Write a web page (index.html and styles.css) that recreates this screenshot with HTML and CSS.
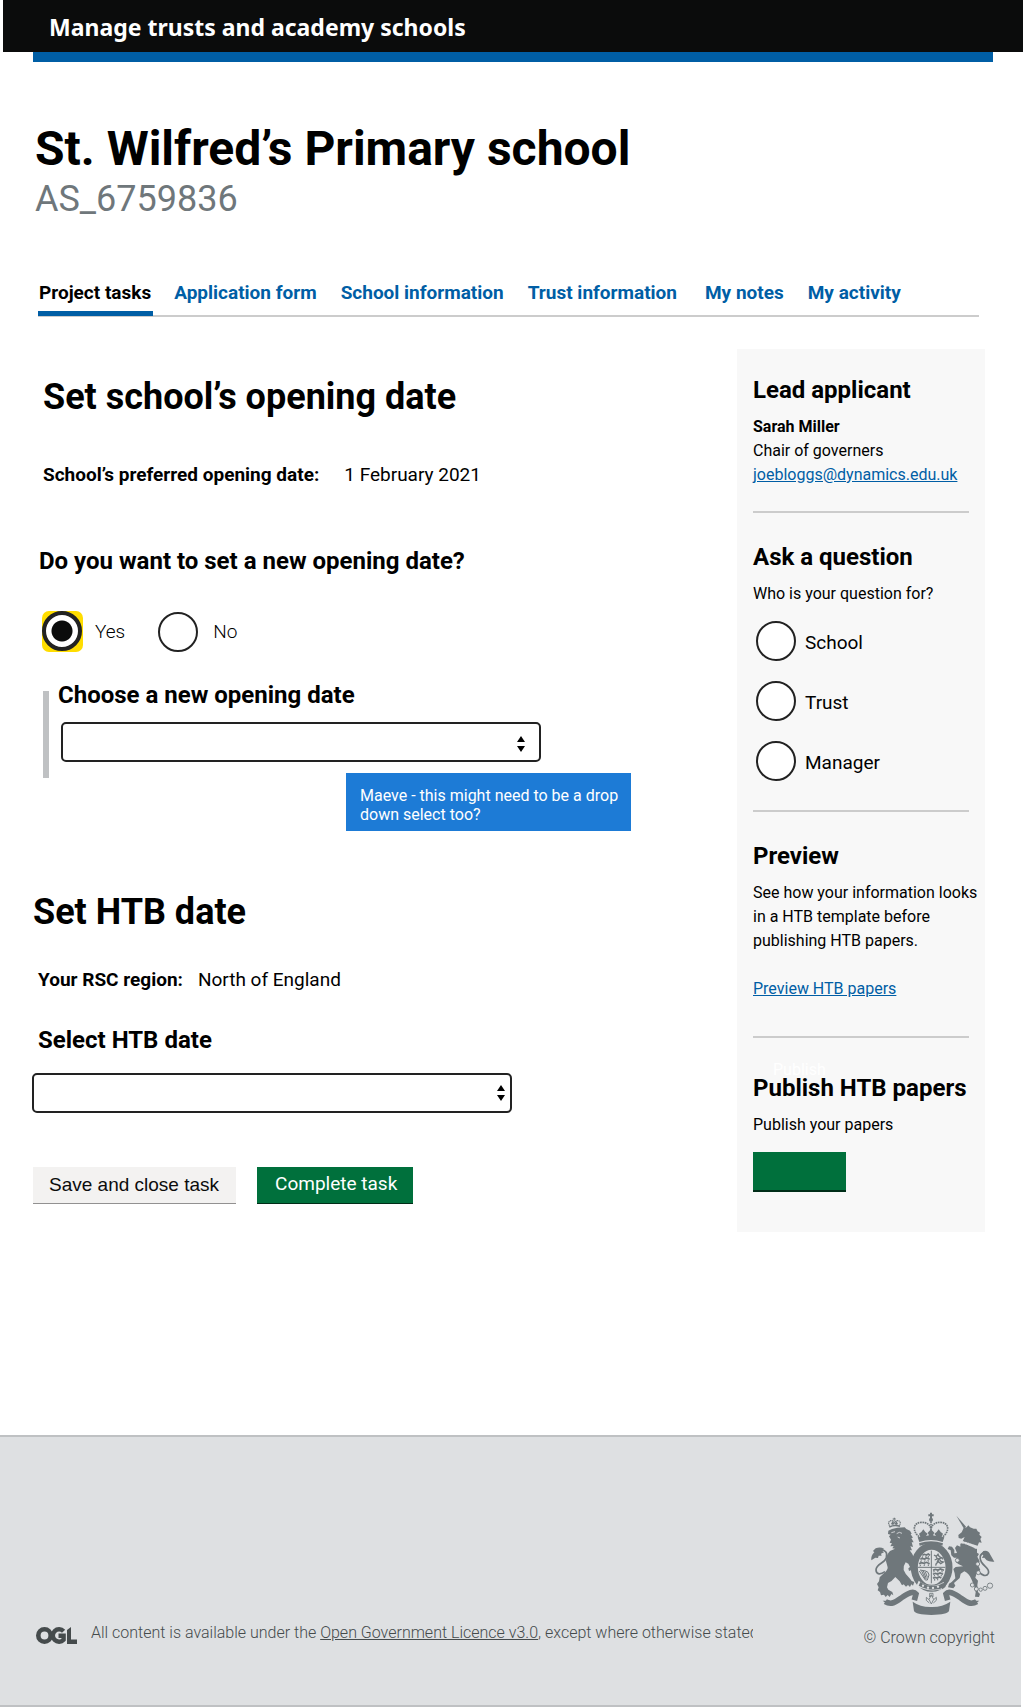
FILE: index.html
```html
<!DOCTYPE html>
<html lang="en">
<head>
<meta charset="utf-8">
<meta name="viewport" content="width=device-width, initial-scale=1">
<title>Set school’s opening date</title>
<link rel="stylesheet" href="styles.css">
</head>
<body>
<header class="site-header">
  <a class="site-name" href="#">Manage trusts and academy schools</a>
</header>
<div class="site-stripe"></div>

<div class="page">
  <div class="page-title">
    <h1>St. Wilfred’s Primary school</h1>
    <p class="reference">AS_6759836</p>
  </div>

  <nav class="tabs" aria-label="Project">
    <a class="tab tab-current" href="#" aria-current="page">Project tasks</a>
    <a class="tab" href="#">Application form</a>
    <a class="tab" href="#">School information</a>
    <a class="tab" href="#">Trust information</a>
    <span class="tab-group">
      <a class="tab" href="#">My notes</a>
      <a class="tab" href="#">My activity</a>
    </span>
  </nav>

  <div class="columns">
    <main class="tasks">
      <section class="opening">
        <h2>Set school’s opening date</h2>
        <dl class="fact fact-wide">
          <dt>School’s preferred opening date:</dt>
          <dd>1 February 2021</dd>
        </dl>
        <fieldset class="question">
          <legend>Do you want to set a new opening date?</legend>
          <div class="choices">
            <label class="choice"><span class="focus-box"><input class="radio" type="radio" name="new-date" checked></span><span>Yes</span></label>
            <label class="choice choice-no"><input class="radio" type="radio" name="new-date"><span>No</span></label>
          </div>
        </fieldset>
        <div class="conditional">
          <label class="field-label" for="opening-date">Choose a new opening date</label>
          <div class="select select-inset">
            <select id="opening-date"><option></option></select>
            <svg class="arrows" viewBox="0 0 8 17" aria-hidden="true"><path d="M4 0L8 6H0ZM4 16L0 10H8Z"/></svg>
          </div>
        </div>
        <p class="annotation">Maeve - this might need to be a drop down select too?</p>
      </section>

      <section class="htb">
        <h2>Set HTB date</h2>
        <dl class="fact">
          <dt>Your RSC region:</dt>
          <dd>North of England</dd>
        </dl>
        <label class="field-label" for="htb-date">Select HTB date</label>
        <div class="select select-flush">
          <select id="htb-date"><option></option></select>
          <svg class="arrows" viewBox="0 0 8 17" aria-hidden="true"><path d="M4 0L8 6H0ZM4 16L0 10H8Z"/></svg>
        </div>
      </section>

      <div class="actions">
        <button class="button button-secondary" type="button">Save and close task</button>
        <button class="button" type="button">Complete task</button>
      </div>
    </main>

    <aside class="sidebar">
      <section class="panel">
        <h3>Lead applicant</h3>
        <p><strong>Sarah Miller</strong><br>Chair of governers<br><a href="#">joebloggs@dynamics.edu.uk</a></p>
      </section>
      <section class="panel panel-ask">
        <h3 id="ask">Ask a question</h3>
        <p>Who is your question for?</p>
        <div class="recipients" role="radiogroup" aria-labelledby="ask">
          <label class="choice"><input class="radio" type="radio" name="recipient"><span>School</span></label>
          <label class="choice"><input class="radio" type="radio" name="recipient"><span>Trust</span></label>
          <label class="choice"><input class="radio" type="radio" name="recipient"><span>Manager</span></label>
        </div>
      </section>
      <section class="panel panel-preview">
        <h3>Preview</h3>
        <p>See how your information looks in a HTB template before publishing HTB papers.</p>
        <p class="preview-link"><a href="#">Preview HTB papers</a></p>
      </section>
      <section class="panel panel-publish">
        <h3>Publish HTB papers</h3>
        <p>Publish your papers</p>
        <button class="publish" type="button"><span class="publish-label">Publish</span></button>
      </section>
    </aside>
  </div>
</div>

<footer class="site-footer">
  <div class="licence">
    <svg class="ogl" viewBox="0 0 41 17" role="img" aria-label="OGL">
      <circle cx="8.5" cy="8.5" r="6.2" fill="none" stroke="#454b4c" stroke-width="4.6"/>
      <path d="M27.6 4.3A6.2 6.2 0 1 0 27.6 12.700V8.800H22.500" fill="none" stroke="#454b4c" stroke-width="4.4"/>
      <path d="M31 3L35 0V12.500H41V17H31Z" fill="#454b4c"/>
    </svg>
    <p class="licence-text">All content is available under the <a href="#">Open Government Licence v3.0</a>, except where otherwise stated</p>
  </div>
  <div class="crown">
    <svg class="crest" viewBox="30 36 375 315" aria-hidden="true">
      <g fill="#6f777b">
        <path d="M210 38h6v5h5v6h-5v5h-6v-5h-5v-6h5z"/>
        <circle cx="213" cy="59" r="6"/>
        <path d="M173 112L181 110L177 101L184 96L190 88L196 96L203 101L198 108L207 106L203 98L213 88L223 98L219 106L228 108L223 101L230 96L236 88L242 96L249 101L245 110L253 112L248 126Q213 114 178 126Z"/>
        <path d="M177 130Q213 118 249 130L247 137Q213 126 179 137Z"/>
      </g>
      <g fill="none" stroke="#6f777b" stroke-width="5" stroke-dasharray="5 2">
        <path d="M177 110C155 92 160 67 185 67C201 67 209 74 212 84"/>
        <path d="M249 110C271 92 266 67 241 67C225 67 217 74 214 84"/>
        <path d="M213 64V92"/>
      </g>
      <ellipse cx="215" cy="202" rx="52" ry="63" fill="none" stroke="#6f777b" stroke-width="21"/>
      <g fill="none" stroke="#6f777b">
        <path d="M214 152V250M173 202H256" stroke-width="3"/>
        <path d="M187 166l6-3 6 2 6-3 5 4M181 178l6-3 7 2 6-3 9 4M177 191l7-3 8 2 7-3 10 4" stroke-width="5"/>
        <path d="M219 211l7-3 8 2 7-3 11 4M219 223l7-3 7 2 7-3 9 4M219 235l6-3 6 2 7-3 6 3" stroke-width="5"/>
        <path d="M188 169l-2 5M198 168l-1 5M205 168v5M184 181l-2 5M195 181l-2 4M204 180l1 5M182 194l-2 5M194 193l-2 5M205 193v5M223 212l-2 5M234 211l-1 6M245 211l2 6M224 225l-2 4M234 224v5M243 225l2 4M224 236v6M233 236v5" stroke-width="3"/>
        <path d="M222 165l7 4 5-6 3 6 8 5-8 2 6 8 7 2-8 5-6-6-7 5-2 7M224 180l7-3M228 172l8 7-5 7M245 171l4 7" stroke-width="4"/>
        <path d="M180 210L197 213Q206 215 207 225L202 240L196 240L178 213M185 213L196 237M190 213L199 236M196 215L202 232" stroke-width="3"/>
      </g>
      <path d="M176 242Q211 270 251 246L256 264Q216 281 169 259Z" fill="#dee0e2"/>
      <path d="M181 246Q211 267 247 251L251 263Q215 278 176 257Z" fill="#6f777b"/>
      <path d="M242 252L262 245L256 261L247 268Z" fill="#6f777b"/>
      <g fill="#dee0e2"><circle cx="189" cy="257" r="3.500"/><circle cx="204" cy="263" r="3.500"/><circle cx="219" cy="264" r="3.500"/><circle cx="234" cy="260" r="3.500"/></g>

      <g fill="#6f777b">
        <path d="M85 92L96 87L112 83L134 82L139 87L150 92L155 101L152 103L159 113L154 114L161 127L155 127L159 141L151 139L156 151L149 151Q157 160 162 174L167 187L165 195L170 202L166 216L161 211L158 218L153 211L147 213L145 205L150 201L145 191L137 187Q130 196 131 210Q136 224 150 236L155 243L163 246L159 257L154 253L150 261L144 255L138 260L131 253L126 256L119 244L106 231Q97 243 84 249L81 262L85 269L97 276L100 286L94 282L89 291L83 285L77 291L72 284L63 286L60 276L53 271L56 262L51 252L57 244L59 232L70 221Q84 211 83 202L78 184Q78 165 90 153L105 146L97 145L101 138L91 139L96 130L89 128L93 119L87 109L92 104L84 102Z"/>
        <path d="M47 145Q60 139 72 146L67 153L72 157L63 161L65 167L56 167L54 174L46 173L34 181Q32 167 43 157L39 153Z"/>
      </g>
      <g fill="none" stroke="#6f777b">
        <path d="M89 77C82 68 88 61 95 62C100 62 102 66 103 70C104 66 107 62 113 62C121 62 124 70 117 77M103 53V62M98 57H108" stroke-width="3.500" stroke-dasharray="4 1.500"/>
        <path d="M88 81Q103 73 120 79M95 73l3-5 3 5M106 73l3-5 3 5" stroke-width="5"/>
      </g>
      <path d="M94 98l11-3M110 101l8-4 8 3M113 111l7 3" stroke="#dee0e2" stroke-width="2.500" fill="none"/>
      <path d="M60 151C75 148 84 158 79 173C74 190 48 191 48 210C49 225 62 224 75 215" fill="none" stroke="#6f777b" stroke-width="5"/>

      <g fill="#6f777b">
        <path d="M289 47L318 80L312 86Z"/>
        <path d="M311 84L320 82L325 76L330 82L341 86L349 86L353 94L360 98L358 104L365 111L361 117L365 128L357 127L353 137L308 124L314 111L304 116L296 114L295 105L305 97Z"/>
        <path d="M309 129L351 147L351 158L357 162L352 170L359 184L354 194L361 210L350 220L346 233L354 242L352 255L354 276L360 282L357 291L345 290L347 277L342 256L334 237Q327 220 313 214L302 221L299 234L282 249L286 257L280 265L264 262L267 251L275 246L286 235L284 220L280 207L287 201L309 199Q293 193 288 187L290 173L282 173L274 166L272 151L263 147L267 139L276 140L283 150L283 160L291 159L285 144L291 136L301 140L301 131Z"/>
        <path d="M370 153Q385 149 391 164L397 175L403 185Q387 186 380 181L373 173L366 174L370 166L364 161Z"/>
      </g>
      <path d="M307 127Q329 131 350 144" fill="none" stroke="#dee0e2" stroke-width="7" stroke-dasharray="5 3"/>
      <path d="M374 157C358 161 358 175 364 186C372 200 391 206 385 220C379 232 366 226 355 214" fill="none" stroke="#6f777b" stroke-width="5"/>
      <g fill="#dee0e2" stroke="#6f777b" stroke-width="2.500">
        <circle cx="292" cy="181" r="6"/><circle cx="353" cy="192" r="6"/><circle cx="355" cy="218" r="6"/><circle cx="337" cy="255" r="6"/><circle cx="349" cy="267" r="6"/><circle cx="362" cy="269" r="5"/><circle cx="375" cy="265" r="6"/><circle cx="390" cy="257" r="8"/>
      </g>

      <g fill="none" stroke="#6f777b" stroke-width="17">
        <path d="M76 305C96 318 112 302 128 291C146 279 160 272 168 282L163 301"/>
        <path d="M350 305C330 318 314 302 298 291C280 279 266 272 258 282L263 301"/>
      </g>
      <g fill="#6f777b">
        <path d="M68 302L90 302L84 314Z"/>
        <path d="M358 302L336 302L342 314Z"/>
        <path d="M158 305Q182 322 214 321Q246 322 271 305L267 333Q263 344 214 345Q166 344 162 333Z"/>
      </g>
      <path d="M209 280h10v10M209 280v11l5-7 5 7M214 286l7 12-7 14-7-14zM207 299l-8-7v9l9 8M221 299l8-7v9l-9 8" fill="none" stroke="#6f777b" stroke-width="2.500"/>
    </svg>
    <p>© Crown copyright</p>
  </div>
</footer>
</body>
</html>
```

FILE: styles.css
```css
* {
  box-sizing: border-box;
}

body {
  margin: 0;
  background: #fff;
  color: #000;
  font: 16px/24px Roboto, "Liberation Sans", sans-serif;
}

h1, h2, h3, p, dl, dd, fieldset {
  margin: 0;
  padding: 0;
}

a {
  color: #005ea5;
}

/* Header */
.site-header {
  margin: 0 2px 0 3px;
  padding: 11px 46px 9px;
  background: #0b0c0c;
}

.site-name {
  display: block;
  color: #fff;
  font: 700 23px/32px "Noto Sans", sans-serif;
  text-decoration: none;
}

.site-stripe {
  height: 10px;
  margin: 0 32px 0 33px;
  background: #005ea5;
}

/* Page */
.page {
  padding: 59px 40px 0 33px;
}

.page-title {
  padding-left: 2px;
}

h1 {
  font-size: 48px;
  line-height: 56px;
}

.reference {
  color: #6f777b;
  font-size: 36px;
  line-height: 44px;
}

.tabs {
  display: flex;
  gap: 22px;
  margin: 60px 6px 0 5px;
  border-bottom: 2px solid #ccc;
  font-size: 19px;
  font-weight: 700;
}

.tab {
  margin-bottom: -1px;
  padding: 0 1px 6px;
  border-bottom: 5px solid transparent;
  text-decoration: none;
}

.tab-current {
  margin-right: -2px;
  padding-right: 2px;
  border-color: #005ea5;
  color: #000;
}

.tab-group {
  display: flex;
  gap: 22px;
  margin-left: 4px;
}

.columns {
  display: grid;
  grid-template-columns: 1fr 248px;
  margin-top: 32px;
}

.tasks {
  padding-top: 26px;
}

h2 {
  font-size: 36px;
  line-height: 44px;
}

.opening {
  padding-left: 10px;
}

.fact {
  display: flex;
  gap: 15px;
  margin-top: 34px;
  font-size: 19px;
}

.fact dt {
  font-weight: 700;
}

.fact-wide {
  gap: 25px;
  margin-top: 44px;
}

.question {
  margin: 58px 0 0 -4px;
  border: 0;
}

.question legend,
.field-label,
h3 {
  display: block;
  padding: 0;
  font-size: 24px;
  font-weight: 700;
  line-height: 32px;
}

.choices {
  display: flex;
  gap: 33px;
  padding: 34px 0 0 3px;
  font-weight: 300;
}

.choice {
  display: flex;
  align-items: center;
  gap: 12px;
  font-size: 19px;
}

.choice-no {
  gap: 15px;
}

.radio {
  flex: none;
  appearance: none;
  width: 40px;
  height: 40px;
  margin: 0;
  border: 2px solid #222;
  border-radius: 50%;
  background: #fff;
}

.radio:checked {
  display: block;
  border-width: 4px;
  background: radial-gradient(circle, #0b0c0c 10px, #fff 11px);
}

.focus-box {
  padding: 0 1px 1px 0;
  border-radius: 7px;
  background: #ffdd00;
}

.conditional {
  display: flow-root;
  margin-top: 39px;
  padding: 0 0 16px 9px;
  border-left: 6px solid #bfc1c3;
}

.conditional .field-label {
  margin-top: -12px;
}

.select {
  position: relative;
  max-width: 480px;
}

.select select {
  display: block;
  appearance: none;
  width: 100%;
  height: 40px;
  padding: 0 32px 0 8px;
  border: 2px solid #222;
  border-radius: 5px;
  background: #fff;
  font: inherit;
}

.arrows {
  position: absolute;
  top: 12px;
  right: 7px;
  width: 8px;
  height: 17px;
  pointer-events: none;
}

.select-inset {
  margin: 11px 0 0 3px;
}

.select-inset .arrows {
  top: 14px;
  right: 16px;
}

.select-flush {
  margin: 17px 0 0 -6px;
}

.annotation {
  max-width: 285px;
  margin: -5px 0 0 303px;
  padding: 13px 10px 7px 14px;
  background: #1d7bd6;
  color: #fff;
  line-height: 19px;
}

.htb {
  margin-top: 59px;
  padding-left: 5px;
}

.htb h2 {
  margin-left: -5px;
}

.htb .field-label {
  margin-top: 32px;
}

.actions {
  display: flex;
  gap: 21px;
  margin-top: 54px;
}

.button,
.publish {
  border: 0;
  border-bottom: 1px solid #002d18;
  border-radius: 0;
  background: #00703c;
  color: #fff;
}

.button {
  height: 37px;
  padding: 0 16px 2px 18px;
  font: 19px/32px Roboto, sans-serif;
}

.button-secondary {
  padding: 0 17px 1px 16px;
  border-color: #929191;
  background: #f3f2f1;
  color: #0b0c0c;
  font-family: "Liberation Sans", Arial, sans-serif;
}

/* Sidebar */
.sidebar {
  padding: 25px 8px 40px 16px;
  background: #f8f8f8;
}

.panel {
  margin-right: 8px;
}

.panel + .panel {
  margin-top: 24px;
  padding-top: 28px;
  border-top: 2px solid #ccc;
}

.panel p {
  margin: 9px -16px 0 0;
}

.recipients {
  display: grid;
  gap: 20px;
  padding: 15px 0 5px 3px;
}

.recipients .choice {
  gap: 9px;
}

.recipients .choice span {
  padding-top: 3px;
}

.panel .preview-link {
  margin-top: 24px;
}

.panel + .panel-publish {
  margin-top: 35px;
  padding-top: 34px;
}

.publish {
  position: relative;
  display: block;
  width: 93px;
  height: 40px;
  margin-top: 15px;
  border-bottom-width: 2px;
}

.publish-label {
  position: absolute;
  bottom: 108px;
  left: 20px;
  font: 16px/24px Roboto, sans-serif;
}

/* Footer */
.site-footer {
  display: flex;
  justify-content: space-between;
  align-items: flex-end;
  margin: 203px 4px 0 0;
  padding: 75px 26px 55px 36px;
  border: solid #bfc1c3;
  border-width: 2px 0;
  background: #dee0e2;
  color: #454b4c;
  font-weight: 300;
}

.site-footer a {
  color: inherit;
}

.licence {
  display: flex;
  align-items: center;
  gap: 14px;
  min-width: 0;
  margin-bottom: 5px;
}

.ogl {
  flex: none;
  width: 41px;
  height: 17px;
  margin-top: 4px;
}

.licence-text {
  overflow: hidden;
  max-width: 662px;
  white-space: nowrap;
}

.crown {
  text-align: right;
}

.crest {
  display: block;
  width: 125px;
  height: 105px;
  margin: 0 0 9px auto;
}
```
